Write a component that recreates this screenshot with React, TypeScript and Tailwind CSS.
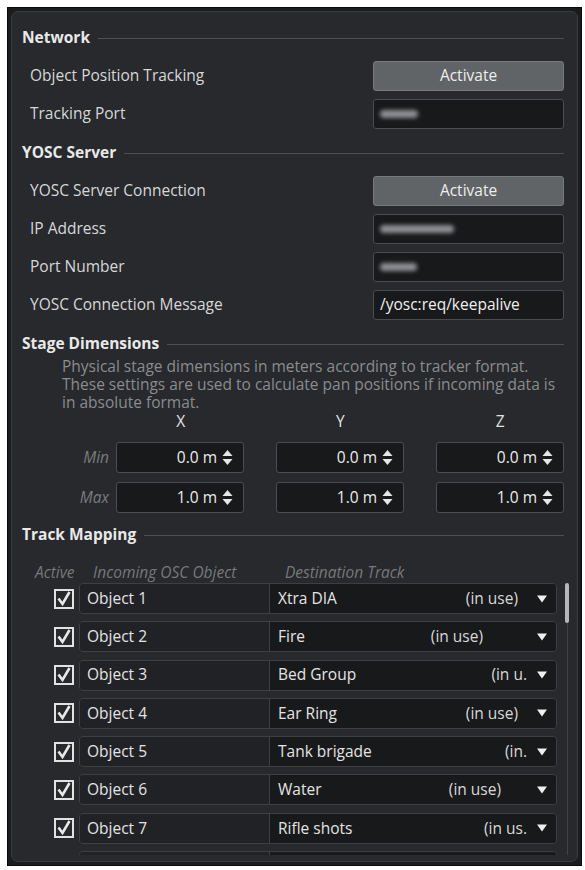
import React from 'react'

const FONT = "font-['Open_Sans','Noto_Sans',sans-serif]"

// ── small drawings ──────────────────────────────────────────────

function SpinArrows() {
  return (
    <svg width="11" height="17" viewBox="0 0 11 17" className="shrink-0">
      <polygon points="0.5,7 5.5,1 10.5,7" fill="#e6e6e6" />
      <polygon points="0.5,10 5.5,16 10.5,10" fill="#e6e6e6" />
    </svg>
  )
}

function CheckBox() {
  return (
    <svg width="20" height="20" viewBox="0 0 20 20" className="shrink-0">
      <rect x="1" y="1" width="18" height="18" fill="none" stroke="#e2e2e2" strokeWidth="2" />
      <path d="M4.5 9.5 L8.5 15 L15.5 3" fill="none" stroke="#e8e8e8" strokeWidth="2.6" strokeLinejoin="miter" />
    </svg>
  )
}

function DropTriangle() {
  return (
    <svg width="10" height="8" viewBox="0 0 10 8" className="shrink-0">
      <polygon points="0,0.5 10,0.5 5,7.5" fill="#f0f0f0" />
    </svg>
  )
}

// ── building blocks ─────────────────────────────────────────────

function SectionHeader({ title, className = '' }: { title: string; className?: string }) {
  return (
    <div className={`flex items-center h-[30px] gap-[8px] ${className}`}>
      <span className="text-[15.5px] font-bold text-[#e9e9ea]">{title}</span>
      <div className="flex-1 h-px bg-[#4d5053]" />
    </div>
  )
}

function Row({ label, children }: { label: string; children: React.ReactNode }) {
  return (
    <div className="flex items-center h-[30px] mt-[8px]">
      <span className="pl-[8px] text-[15.5px] text-[#d6d7d8]">{label}</span>
      <div className="ml-auto w-[191px] h-full">{children}</div>
    </div>
  )
}

function ActivateButton() {
  return (
    <button className="w-full h-full rounded-[3px] bg-[#616467] border border-[#77797c] text-[15.5px] text-[#eeeeee]">
      Activate
    </button>
  )
}

function Field({ blob, text }: { blob?: string; text?: string }) {
  return (
    <div className="w-full h-full rounded-[3px] bg-[#18191b] border border-[#4a4d50] flex items-center pl-[6px]">
      {blob && <div className={`h-[8px] rounded-full bg-[#8d8f92] blur-[2px] ${blob}`} />}
      {text && <span className="text-[15.5px] text-[#f0f0f0]">{text}</span>}
    </div>
  )
}

function SpinBox({ value }: { value: string }) {
  return (
    <div className="w-[128px] h-[31px] rounded-[3px] bg-[#18191b] border border-[#4a4d50] flex items-center justify-end pr-[10px] gap-[5px]">
      <span className="text-[15.5px] text-[#ececec]">{value}</span>
      <SpinArrows />
    </div>
  )
}

// ── track mapping data ──────────────────────────────────────────

const TRACKS = [
  { obj: 'Object 1', dest: 'Xtra DIA', status: '(in use)', mr: 'mr-[19px]' },
  { obj: 'Object 2', dest: 'Fire', status: '(in use)', mr: 'mr-[54px]' },
  { obj: 'Object 3', dest: 'Bed Group', status: '(in u.', mr: 'mr-[10px]' },
  { obj: 'Object 4', dest: 'Ear Ring', status: '(in use)', mr: 'mr-[19px]' },
  { obj: 'Object 5', dest: 'Tank brigade', status: '(in.', mr: 'mr-[10px]' },
  { obj: 'Object 6', dest: 'Water', status: '(in use)', mr: 'mr-[36px]' },
  { obj: 'Object 7', dest: 'Rifle shots', status: '(in us.', mr: 'mr-[10px]' },
]

function TrackRow({ t }: { t?: (typeof TRACKS)[number] }) {
  return (
    <div className="flex items-center h-[31px] shrink-0">
      <div className="w-[57px] flex justify-end pr-[5px]">
        {t && <CheckBox />}
      </div>
      <div className="flex-1 h-full flex rounded-[4px] border border-[#3d3f42] overflow-hidden">
        <div className="w-[190px] h-full bg-[#212225] border-r border-[#3d3f42] flex items-center pl-[7px] text-[15.5px] text-[#e4e4e4]">
          {t?.obj}
        </div>
        <div className="flex-1 h-full bg-[#18191b] flex items-center pl-[8px] pr-[9px] text-[15.5px] text-[#e4e4e4]">
          {t && (
            <>
              <span>{t.dest}</span>
              <span className={`ml-auto text-[#d8d8d8] ${t.mr}`}>{t.status}</span>
              <DropTriangle />
            </>
          )}
        </div>
      </div>
    </div>
  )
}

// ── main ────────────────────────────────────────────────────────

export default function App() {
  return (
    <div className={`w-[585px] h-[870px] bg-white pt-[7px] pl-[7px] ${FONT}`}>
      <div className="w-[575px] h-[859px] bg-[#1b1c1e] border border-[#0b0b0c] p-[3px]">
        <div className="h-full rounded-[7px] border border-[#3a3c3f] bg-[#27292c] pt-[11px] pl-[10px] pr-[13px] overflow-hidden flex flex-col">
          {/* Network */}
          <SectionHeader title="Network" />
          <Row label="Object Position Tracking"><ActivateButton /></Row>
          <Row label="Tracking Port"><Field blob="w-[38px]" /></Row>

          {/* YOSC */}
          <SectionHeader title="YOSC Server" className="mt-[9px]" />
          <Row label="YOSC Server Connection"><ActivateButton /></Row>
          <Row label="IP Address"><Field blob="w-[74px]" /></Row>
          <Row label="Port Number"><Field blob="w-[37px]" /></Row>
          <Row label="YOSC Connection Message"><Field text="/yosc:req/keepalive" /></Row>

          {/* Stage */}
          <SectionHeader title="Stage Dimensions" className="mt-[9px]" />
          <div className="pl-[40px] mt-[-2px] text-[15.5px] leading-[18px] text-[#8a8c8f] whitespace-nowrap">
            <div>Physical stage dimensions in meters according to tracker format.</div>
            <div>These settings are used to calculate pan positions if incoming data is</div>
            <div>in absolute format.</div>
          </div>
          <div className="flex h-[18px] mt-[2px] items-center text-[15.5px] text-[#e2e2e2]">
            <div className="w-[88px]" />
            <div className="ml-[7px] w-[128px] text-center">X</div>
            <div className="ml-[32px] w-[128px] text-center">Y</div>
            <div className="ml-[32px] w-[128px] text-center">Z</div>
          </div>
          {[
            { label: 'Min', v: '0.0 m', mt: 'mt-[11px]' },
            { label: 'Max', v: '1.0 m', mt: 'mt-[9px]' },
          ].map((r) => (
            <div key={r.label} className={`flex items-center ${r.mt}`}>
              <div className="w-[88px] text-right italic text-[15.5px] text-[#7a7c7f]">{r.label}</div>
              <div className="ml-[7px]"><SpinBox value={r.v} /></div>
              <div className="ml-[32px]"><SpinBox value={r.v} /></div>
              <div className="ml-[32px]"><SpinBox value={r.v} /></div>
            </div>
          ))}

          {/* Track mapping */}
          <SectionHeader title="Track Mapping" className="mt-[7px]" />
          <div className="flex h-[18px] items-center mt-[14px] italic text-[15.5px] text-[#76787b]">
            <span className="pl-[13px] w-[71px]">Active</span>
            <span className="w-[192px]">Incoming OSC Object</span>
            <span>Destination Track</span>
          </div>
          <div className="flex-1 flex mt-[1px] mr-[-6px] min-h-0 overflow-hidden">
            <div className="w-[535px] shrink-0 flex flex-col gap-[7.3px]">
              {TRACKS.map((t) => (
                <TrackRow key={t.obj} t={t} />
              ))}
              <TrackRow />
            </div>
            <div className="ml-[8px] w-[4px] shrink-0 flex flex-col items-center">
              <div className="w-[4px] h-[40px] rounded-full bg-[#b5b7b9]" />
              <div className="w-px flex-1 bg-[#3f4144]" />
            </div>
          </div>
          <div className="h-[6px] shrink-0" />
        </div>
      </div>
    </div>
  )
}
